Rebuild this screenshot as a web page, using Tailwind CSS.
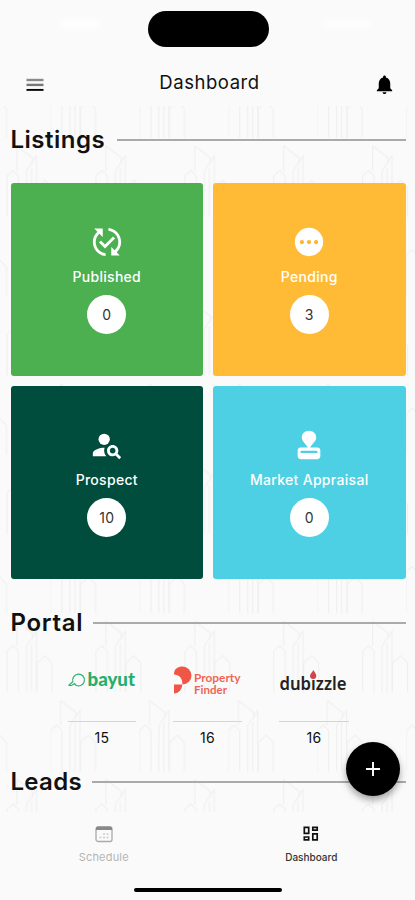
<!DOCTYPE html>
<html lang="en">
<head>
<meta charset="utf-8">
<title>Dashboard</title>
<script src="https://cdn.jsdelivr.net/npm/@tailwindcss/browser@4"></script>
</head>
<body class="bg-[#fafafa] font-['Inter',sans-serif] text-black">
<div class="relative flex h-[900px] w-[415px] flex-col overflow-hidden bg-[#fafafa]">
  <!-- status bar -->
  <div class="flex h-[58px] shrink-0 items-start justify-between pt-[11px]">
    <div class="mt-[7px] ml-[60px] h-3 w-10 rounded bg-white/70 blur-[3px]"></div>
    <div class="-ml-[4px] h-[36px] w-[121px] rounded-full bg-black"></div>
    <div class="mt-[9px] mr-[44px] h-2 w-[50px] rounded bg-white/70 blur-[3px]"></div>
  </div>
  <!-- app bar -->
  <header class="flex h-12 shrink-0 items-center justify-between pr-[19px] pl-[26px]">
    <svg class="mt-[5px] h-[14px] w-[18px]" viewBox="0 0 18 14"><path d="M0.5 2h17" stroke="#8a8a8a" stroke-width="2.400"/><path d="M0.5 6.900h17" stroke="#777" stroke-width="2.400"/><path d="M0.5 11.900h17" stroke="#000" stroke-width="1.900"/></svg>
    <h1 class="ml-[2px] text-[18.5px] leading-6 tracking-[0.55px] text-[#111]">Dashboard</h1>
    <svg class="mt-[5px] h-[23px] w-[23px]" viewBox="0 0 24 24"><path d="M12 22c1.1 0 2-.9 2-2h-4c0 1.1.89 2 2 2zm6-6v-5c0-3.07-1.64-5.64-4.5-6.32V4c0-.83-.67-1.500-1.500-1.500s-1.500.67-1.500 1.500v.68C7.630 5.360 6 7.920 6 11v5l-2 2v1h16v-1l-2-2z"/></svg>
  </header>
  <!-- scrolling content -->
  <main class="relative h-[706px] shrink-0 overflow-hidden pr-[9.500px] pl-[10.500px]">
    <svg class="absolute top-0 left-0 h-full w-full" width="415" height="706">
      <defs>
        <g id="towers" fill="none" stroke="#eeeeee" stroke-width="1">
          <path d="M0 71V30L6 24.500L11.500 30V71M10 25V0L25.500 12V18M19.500 71V25L29.500 10V71M24.500 22V71M30 71V42L38 34.500L45 42V71"/>
        </g>
        <pattern id="city" width="88.9" height="158.4" patternUnits="userSpaceOnUse" patternTransform="translate(50.500 594.500)">
          <use href="#towers"/><use href="#towers" x="45.400" y="79"/><use href="#towers" x="-43.500" y="79"/>
        </pattern>
      </defs>
      <rect width="415" height="706" fill="url(#city)"/>
    </svg>
    <div class="relative">
      <section class="flex h-[77px] items-center pb-[9px]">
        <h2 class="w-[94px] text-2xl font-semibold tracking-[0.5px] text-[#111]">Listings</h2>
        <div class="ml-3 h-[2px] flex-1 bg-[#aaa]"></div>
      </section>
      <section class="grid grid-cols-2 gap-[10px] text-[14px] font-medium tracking-[0.3px] text-white">
        <div class="flex h-[193px] flex-col items-center rounded-[3px] bg-[#4caf50] pt-[42px]">
          <svg class="h-[34px] w-[34px]" viewBox="0 0 24 24" fill="currentColor"><path d="M17.66 9.53l-7.07 7.07-4.24-4.24 1.41-1.41 2.83 2.83 5.66-5.66 1.41 1.41zM4 12c0-2.33 1.02-4.42 2.62-5.88L9 8.5v-6H3l2.2 2.2C3.24 6.52 2 9.11 2 12c0 5.190 3.950 9.450 9 9.950v-2.020c-3.940-.490-7-3.860-7-7.930zm18 0c0-5.190-3.950-9.450-9-9.950v2.020c3.940.490 7 3.860 7 7.930 0 2.330-1.020 4.420-2.620 5.880L15 15.500v6h6l-2.200-2.200c1.960-1.820 3.200-4.410 3.200-7.300z"/></svg>
          <div class="mt-2 leading-5">Published</div>
          <div class="mt-2 flex h-[39px] w-[39px] items-center justify-center rounded-full bg-white font-normal text-[#333]">0</div>
        </div>
        <div class="flex h-[193px] flex-col items-center rounded-[3px] bg-[#ffbb35] pt-[42px]">
          <svg class="h-[34px] w-[34px]" viewBox="0 0 24 24" fill="currentColor"><circle cx="12" cy="12" r="10"/><g fill="#ffb52a"><circle cx="7" cy="12" r="1.500"/><circle cx="12" cy="12" r="1.500"/><circle cx="17" cy="12" r="1.500"/></g></svg>
          <div class="mt-2 leading-5">Pending</div>
          <div class="mt-2 flex h-[39px] w-[39px] items-center justify-center rounded-full bg-white font-normal text-[#333]">3</div>
        </div>
        <div class="flex h-[193px] flex-col items-center rounded-[3px] bg-[#004d3d] pt-[42px]">
          <svg class="h-[34px] w-[34px]" viewBox="0 0 24 24" fill="currentColor"><circle cx="10" cy="8" r="4"/><path d="M10.350 14.010C7.620 13.910 2 15.270 2 18v2h9.540c-2.470-2.760-1.230-5.890-1.190-5.990zM19.430 18.020c.36-.59.57-1.280.57-2.020 0-2.210-1.790-4-4-4s-4 1.790-4 4 1.790 4 4 4c.74 0 1.430-.22 2.020-.57L20.590 22 22 20.590l-2.570-2.570zM16 18c-1.100 0-2-.9-2-2s.9-2 2-2 2 .9 2 2-.9 2-2 2z"/></svg>
          <div class="mt-2 leading-5">Prospect</div>
          <div class="mt-2 flex h-[39px] w-[39px] items-center justify-center rounded-full bg-white font-normal text-[#333]">10</div>
        </div>
        <div class="flex h-[193px] flex-col items-center rounded-[3px] bg-[#4dd0e4] pt-[42px]">
          <svg class="h-[34px] w-[34px]" viewBox="0 0 24 24" fill="currentColor"><path d="M12 2C9.200 2 6.900 4 6.900 6.700C6.900 9.300 9.500 10.800 11.200 13.700H6c-1.100 0-2 .9-2 2V20c0 1.100.9 2 2 2h12c1.100 0 2-.9 2-2v-4.300c0-1.100-.9-2-2-2h-5.200C14.500 10.800 17.100 9.300 17.100 6.700C17.100 4 14.800 2 12 2zM6.600 16h10.800c.9 0 .9 1.700 0 1.700H6.600c-.9 0-.9-1.700 0-1.700z"/></svg>
          <div class="mt-2 leading-5">Market Appraisal</div>
          <div class="mt-2 flex h-[39px] w-[39px] items-center justify-center rounded-full bg-white font-normal text-[#333]">0</div>
        </div>
      </section>
      <section class="flex h-[87px] items-center">
        <h2 class="w-[72px] text-2xl font-semibold tracking-[0.7px] text-[#111]">Portal</h2>
        <div class="ml-[10px] h-[2px] flex-1 bg-[#aaa]"></div>
      </section>
      <section class="flex h-[86px] gap-[37px] pl-[57.500px] text-center text-[14px] tracking-[0.3px] text-[#111]">
        <div class="w-[68px]">
          <svg class="h-[55px] w-[68px]" viewBox="0 0 68 55"><path d="M5 16A5.900 5.900 0 1 1 8 19.300M0.500 19.500L5 15.500M0.500 19.500H3.500L6.500 17.500L8 19.300" fill="none" stroke="#2fb273" stroke-width="1.200"/><text x="19.500" y="19.500" textLength="47.500" lengthAdjust="spacingAndGlyphs" font-family="Lato, sans-serif" font-weight="900" font-size="18.500" letter-spacing="0" fill="#27ae6b">bayut</text></svg>
          <div class="h-px bg-[#b5e6ca]"></div>
          <div class="mt-[6px] leading-5">15</div>
        </div>
        <div class="w-[69px]">
          <svg class="h-[55px] w-[69px]" viewBox="0 0 69 55"><path d="M1 7.500C1.500 2.500 5 0.500 9.500 0.500A9 9 0 0 1 9.500 18.500C9.500 12 6 8.500 1 8.500zM1 18.500H9.200C9.200 23 6 27.500 1 27.500z" fill="#f05545"/><g font-family="Lato, sans-serif" font-weight="700" font-size="11.500" letter-spacing="0" fill="#ef6556"><text x="21" y="15.500" textLength="46.500" lengthAdjust="spacingAndGlyphs">Property</text><text x="21" y="27.500" textLength="33" lengthAdjust="spacingAndGlyphs">Finder</text></g></svg>
          <div class="h-px bg-[#f7c9c6]"></div>
          <div class="mt-[6px] leading-5">16</div>
        </div>
        <div class="w-[70px]">
          <svg class="h-[55px] w-[70px] overflow-visible" viewBox="0 0 70 55"><text x="0.500" y="23.500" textLength="67" lengthAdjust="spacingAndGlyphs" font-family="'Noto Sans', sans-serif" font-weight="600" font-size="18" letter-spacing="0" fill="#222">dubizzle</text><path d="M34.300 4C36 6.500 37.300 8 37.300 10C37.300 12 36 13 34.300 13C32.300 13 31 12 31 9.800C31 7.800 33.300 6.500 34.300 4z" fill="#cf4650"/></svg>
          <div class="h-px bg-[#f3c8c4]"></div>
          <div class="mt-[6px] leading-5">16</div>
        </div>
      </section>
      <section class="flex h-[60px] items-center">
        <h2 class="w-[72px] text-2xl font-semibold tracking-[0.3px] text-[#111]">Leads</h2>
        <div class="ml-[9px] h-[2px] flex-1 bg-[#aaa]"></div>
      </section>
    </div>
  </main>
  <!-- bottom navigation -->
  <nav class="grid h-[76px] shrink-0 grid-cols-2 pt-[13px]">
    <div class="flex flex-col items-center text-[#b5b5b5]">
      <svg class="h-[18px] w-[18px]" viewBox="0 0 18 18"><rect x="1" y="2" width="16" height="14.500" rx="2" fill="none" stroke="#aaa" stroke-width="1.300"/><path d="M1 5V3Q1 1.500 3 1.500H15Q17 1.500 17 3V5z" fill="#888"/><path d="M4.500 12.500h2M8 12.500h2M11.500 12.500h2M8 9h2M11.500 9h2" stroke="#ccc" stroke-width="1.400"/></svg>
      <div class="mt-[6px] text-[11px] leading-4 tracking-[0.2px]">Schedule</div>
    </div>
    <div class="flex flex-col items-center">
      <svg class="h-[18px] w-[18px]" viewBox="0 0 18 18" fill="none" stroke="#111" stroke-width="1.700"><path d="M2.300 2.300h4.400v6h-4.400zM10.800 2.300h4.400v2.900h-4.400zM2.300 12h4.400v2.900h-4.400zM10.800 8.900h4.400v6h-4.400z"/></svg>
      <div class="mt-[6px] text-[10px] leading-4 font-medium text-[#333]">Dashboard</div>
    </div>
  </nav>
  <div class="mx-auto h-1 w-[148px] rounded-full bg-black"></div>
  <!-- floating action button -->
  <button class="absolute top-[742px] left-[346px] flex h-[54px] w-[54px] items-center justify-center rounded-full bg-black shadow-[0_4px_7px_rgba(0,0,0,0.35)]">
    <svg class="h-[14px] w-[14px]" viewBox="0 0 14 14"><path d="M7 0v14M0 7h14" stroke="#fff" stroke-width="1.900"/></svg>
  </button>
</div>
</body>
</html>
